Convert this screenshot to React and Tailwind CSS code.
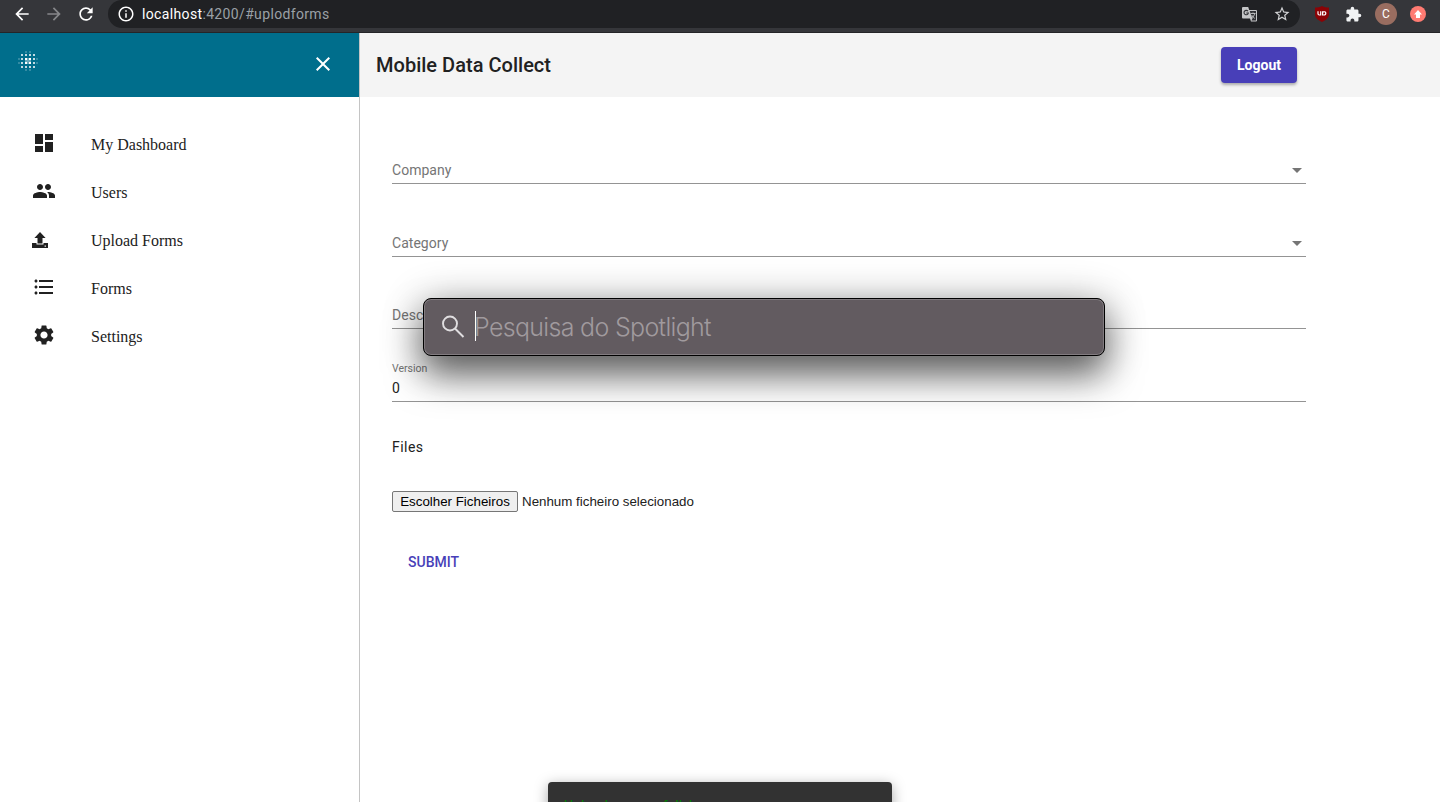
import {
  MdArrowBack, MdArrowForward, MdRefresh, MdInfoOutline, MdStarBorder, MdExtension,
  MdClose, MdDashboard, MdPeople, MdFormatListBulleted, MdSettings, MdArrowDropDown,
} from "react-icons/md";

function TranslateIcon() {
  return (
    <svg width="15" height="15" viewBox="0 0 15 15" className="block">
      <path fill="#c4c5c7" d="M1 0h5.2l1 3H14a1 1 0 0 1 1 1v9.500a1 1 0 0 1-1 1H9l-1-3H1a1 1 0 0 1-1-1V1a1 1 0 0 1 1-1z" />
      <path fill="#303135" d="M7.700 4H14v9.500H9.400l1.200-2L8.700 7z" />
      <path fill="none" stroke="#303135" strokeWidth="1.100" d="M6 4.200A2.200 2.200 0 1 0 6.400 6H4.300" />
      <path fill="none" stroke="#c4c5c7" strokeWidth="0.900" d="M8.500 6.500h5M11 5.500v1M12.800 6.500c-.4 2-1.800 3.500-3 4.300M9.800 8.200c.8 1.400 1.700 2.300 3 3.200" />
    </svg>
  );
}

function ShieldIcon() {
  return (
    <svg width="16" height="16" viewBox="0 0 16 16" className="block">
      <path fill="#8b0306" d="M8 0c2 1.200 4.300 1.600 7 1.600V8c0 4-3 6.300-7 8-4-1.700-7-4-7-8V1.600C3.700 1.600 6 1.200 8 0z" />
      <path fill="none" stroke="#fff" strokeWidth="1.200" d="M4 5.200v2.600q0 1.200 1.300 1.200H6.700V5.200M8.600 5.800v3.200h1.200q2 0 2-1.800T9.800 5.800z" />
    </svg>
  );
}

function DotsIcon() {
  const main = [3, 7, 11, 15];
  return (
    <svg width="20" height="20" viewBox="0 0 20 20" shapeRendering="crispEdges" className="block">
      {main.map((y) => main.map((x) => {
        const center = x > 3 && x < 15 && y > 3 && y < 15;
        return <rect key={`${x}-${y}`} x={x} y={y} width="2" height="2" fill="#fff" opacity={center ? 1 : 0.75} />;
      }))}
      <path fill="#fff" opacity="0.4" d="M9 7h2v6H9zM7 9h2v2H7zM11 9h2v2h-2z" />
      <path fill="#fff" opacity="0.2" d="M7 0h2v2H7zM11 0h2v2h-2zM7 18h2v2H7zM11 18h2v2h-2zM0 7h2v2H0zM0 11h2v2H0zM18 7h2v2h-2zM18 11h2v2h-2z" />
    </svg>
  );
}

function UploadIcon() {
  return (
    <svg width="16" height="17" viewBox="0 0 16 17" className="mt-[2px] block">
      <path fill="#212121" d="M8 0l5.600 6H10.500V11.500h-5V6H2.400z" />
      <path fill="#212121" d="M0 11h4.500v1.500h7V11H16v5H0z" />
      <path fill="#fff" d="M12.600 13.400h1.300v1.300h-1.300z" />
    </svg>
  );
}

function BrowserBar() {
  return (
    <div className="flex h-[33px] items-start border-b border-[#242528] bg-[#35363a]">
      <div className="flex h-7 items-center gap-3 pl-3 text-white">
        <MdArrowBack size={20} />
        <MdArrowForward size={20} className="text-[#86878a]" />
        <MdRefresh size={20} />
      </div>
      <div className="ml-3 flex h-7 w-[1192px] items-center rounded-r-full rounded-l-full bg-[#202124] pr-[9px] pl-[9px]">
        <MdInfoOutline size={18} className="text-white" />
        <div className="ml-[7px] flex-1 text-[14px] tracking-[0.35px] text-[#9aa0a6]">
          <span className="text-white">localhost</span>:4200/#uplodforms
        </div>
        <TranslateIcon />
        <MdStarBorder size={18} className="ml-4 text-[#d0d1d3]" />
      </div>
      <div className="flex h-7 items-center pl-[14px]">
        <ShieldIcon />
        <MdExtension size={17} className="ml-[15px] text-[#f1f3f4]" />
        <div className="ml-[13px] flex size-[22px] items-center justify-center rounded-full bg-[#996d60] text-[12px] text-white">C</div>
        <div className="ml-[13px] flex size-4 items-center justify-center rounded-full bg-[#ff7b72]">
          <svg width="8" height="8" viewBox="0 0 8 8"><path fill="#fff" d="M4 0l4 4.500H6V8H2V4.500H0z" /></svg>
        </div>
      </div>
    </div>
  );
}

const menu = [
  { label: "My Dashboard", icon: <MdDashboard size={24} /> },
  { label: "Users", icon: <MdPeople size={24} /> },
  { label: "Upload Forms", icon: <UploadIcon /> },
  { label: "Forms", icon: <MdFormatListBulleted size={24} /> },
  { label: "Settings", icon: <MdSettings size={24} /> },
];

function Sidebar() {
  return (
    <aside className="w-[360px] shrink-0 border-r border-[#c4c4c4] bg-white">
      <div className="flex h-16 items-start justify-between bg-[#006e8c] pt-[18px] pr-[26px] pl-[18px]">
        <DotsIcon />
        <MdClose size={24} className="mt-px mr-[-2px] text-white" />
      </div>
      <nav className="pt-6">
        {menu.map((m) => (
          <div key={m.label} className="flex h-12 items-center pl-8 font-['Liberation_Serif',serif] text-[16px] text-[#212121]">
            <span className="mt-[-4px] w-[59px]">{m.icon}</span>
            {m.label}
          </div>
        ))}
      </nav>
    </aside>
  );
}

function Field({ label, select }) {
  return (
    <div className="flex h-[27px] items-start justify-between border-b border-[#949494] text-[14px] leading-[26px] tracking-[0.03px] text-[#757575]">
      {label}
      {select && <MdArrowDropDown size={24} className="mt-px mr-[-3px]" />}
    </div>
  );
}

function UploadForm() {
  return (
    <main className="w-[946px] pt-[60px] pl-8">
      <Field label="Company" select />
      <div className="mt-[46px]"><Field label="Category" select /></div>
      <div className="mt-[45px]"><Field label="Description" /></div>
      <div className="mt-[33px] h-10 border-b border-[#949494]">
        <div className="text-[10.500px] leading-[13px] text-[#757575]">Version</div>
        <div className="mt-[5px] text-[14px] leading-[16px] text-[#212121]">0</div>
      </div>
      <div className="mt-[35px] text-[14px] leading-5 tracking-[0.45px] text-[#212121]">Files</div>
      <div className="mt-[34px] flex h-[21px] items-center font-['Liberation_Sans',sans-serif] text-[13.333px] text-[#212121]">
        <button className="h-[21px] w-[126px] rounded-[2px] border border-[#767676] bg-[#efefef] text-center leading-[19px] whitespace-nowrap text-black">Escolher Ficheiros</button>
        <span className="ml-1">Nenhum ficheiro selecionado</span>
      </div>
      <button className="mt-8 ml-4 block h-9 text-[14px] font-medium text-[#483fb8]">SUBMIT</button>
    </main>
  );
}

function Spotlight() {
  return (
    <div className="absolute top-[298px] left-[423px] flex h-[58px] w-[682px] items-center rounded-[8px] border border-black bg-[#625b60] pl-[17px] shadow-[inset_0_0_0_1px_#827c80,0_20px_36px_rgba(0,0,0,0.52),0_4px_40px_rgba(0,0,0,0.32)]">
      <svg width="24" height="24" viewBox="0 0 24 24" fill="none" stroke="#e0dee0" strokeWidth="1.900">
        <circle cx="9" cy="8.500" r="7" /><path d="M14 13.500l8.500 8.500" />
      </svg>
      <div className="mt-[-2px] ml-[10px] h-[30px] w-px bg-white" />
      <div className="mt-[2px] ml-[-2px] font-['Inter',sans-serif] text-[25px] font-light tracking-[-0.68px] whitespace-nowrap text-[#a09a9e]">Pesquisa do Spotlight</div>
    </div>
  );
}

export default function App() {
  return (
    <div className="relative flex h-[802px] w-[1440px] flex-col overflow-hidden bg-white font-['Roboto',sans-serif]">
      <BrowserBar />
      <div className="flex flex-1">
        <Sidebar />
        <div className="flex-1">
          <header className="flex h-16 items-center justify-between bg-[#f4f4f4] pr-[143px] pl-4">
            <h1 className="text-[20px] font-medium tracking-[0.02px] text-[#212121]">Mobile Data Collect</h1>
            <button className="h-9 w-[76px] rounded-[4px] bg-[#483fb8] text-[14px] font-bold text-white shadow-[0_2px_3px_rgba(0,0,0,0.3)]">Logout</button>
          </header>
          <UploadForm />
        </div>
      </div>
      <Spotlight />
      <div className="absolute top-[782px] left-[548px] h-12 w-[344px] rounded-[4px] bg-[#323232] px-4 pt-[14px] text-[14px] leading-5 text-[#008000] shadow-[0_3px_14px_rgba(0,0,0,0.35)]">Upload successfully!</div>
    </div>
  );
}
